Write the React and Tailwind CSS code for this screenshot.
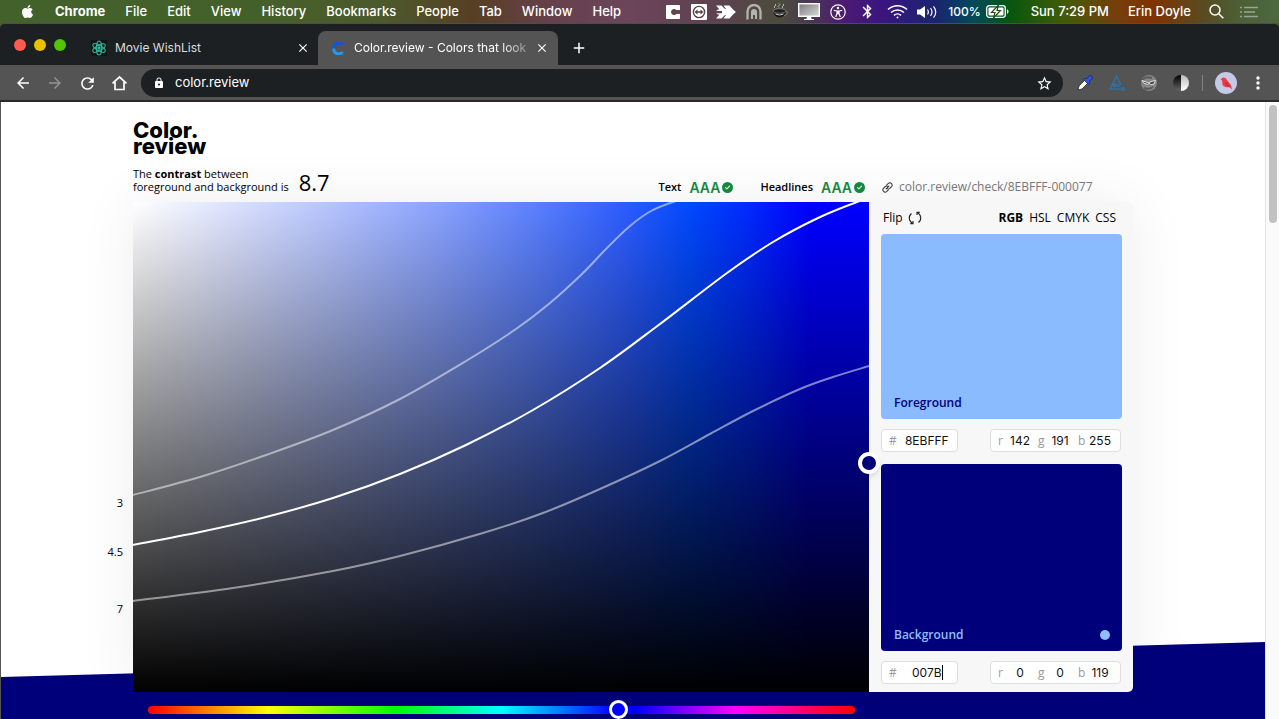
import React from "react";
import { FaApple, FaCircleCheck } from "react-icons/fa6";
import {
  MdAdd, MdArrowBack, MdArrowForward, MdBluetooth, MdClose, MdLock, MdMoreVert, MdRefresh, MdStarBorder,
} from "react-icons/md";

const menus = ["File", "Edit", "View", "History", "Bookmarks", "People", "Tab", "Window", "Help"];

const curves = [
  { opacity: 0.5, points: [[0, 293], [67, 275], [133, 253], [200, 228], [267, 197], [333, 159], [383, 127], [417, 101], [450, 71], [473, 47], [497, 24], [518, 9], [540, 0], [560, -5]] },
  { opacity: 1, points: [[0, 343], [67, 330], [133, 315], [200, 296], [267, 272], [333, 243], [400, 208], [467, 166], [527, 122], [594, 71], [640, 40], [685, 16], [724, 0], [745, -6]] },
  { opacity: 0.5, points: [[0, 399], [100, 386], [200, 369], [267, 354], [350, 331], [410, 311], [467, 287], [527, 259], [577, 232], [620, 209], [667, 187], [700, 175], [736, 164]] },
];

// Catmull-Rom spline through the sampled contrast points, as cubic Béziers
function spline(p) {
  let d = `M${p[0][0]} ${p[0][1]}`;
  for (let i = 0; i < p.length - 1; i++) {
    const a = p[i - 1] || p[i], b = p[i], c = p[i + 1], e = p[i + 2] || c;
    d += ` C${b[0] + (c[0] - a[0]) / 6} ${b[1] + (c[1] - a[1]) / 6} ${c[0] - (e[0] - b[0]) / 6} ${c[1] - (e[1] - b[1]) / 6} ${c[0]} ${c[1]}`;
  }
  return d;
}

function MenuBar() {
  return (
    <header className="flex h-[23px] items-center justify-between bg-[linear-gradient(90deg,#43622b_0%,#44602a_20%,#4c5a2b_30%,#573f24_37%,#66404b_43%,#6c455a_49%,#5c4250_56%,#4c4b3c_61%,#4a3a50_63%,#4c1a72_66%,#3a1580_69%,#1b2372_73%,#04485c_76%,#08560e_79%,#3f5c08_83%,#72400a_87%,#823200_90%,#5a4a20_94%,#4c6036_97%,#4d6840_100%)] pl-5 pr-[21px] font-['Inter',sans-serif] text-[13px] font-medium text-white">
      <nav className="flex items-center gap-5">
        <FaApple className="size-[15px]" />
        <a href="#chrome" className="font-bold">Chrome</a>
        {menus.map((m) => <a key={m} href={"#" + m.toLowerCase()}>{m}</a>)}
      </nav>
      <div className="flex items-center">
        <svg className="h-[14px] w-[15px]" viewBox="0 0 15 14"><rect width="14" height="14" fill="#fff" rx="1" /><path d="M14 5.3H10.5A3 3 0 1 0 10.500 8.700H14" fill="#66424f" /><path d="M8 5.200h6v3.600H8z" fill="#66424f" /></svg>
        <svg className="ml-[10px] h-4 w-4" viewBox="0 0 16 16"><rect width="16" height="16" rx="1" fill="#fff" /><circle cx="8" cy="8" r="5.600" fill="none" stroke="#5b4148" strokeWidth="1.400" /><path d="M3.500 8 6.500 5.500V7.200h3V5.500L12.500 8l-3 2.500V8.800h-3v1.700z" fill="#5b4148" /></svg>
        <svg className="ml-[9px] h-[14px] w-5" viewBox="0 0 20 14"><path d="M0 .5h5.500L9 4h1L7.500 .5h6L17 4.500 20 7l-3 2.500-3.500 4h-6L10 10H9l-3.500 3.500H0L3.500 9.500H2L0 8.200h6V6H0l2-1.500h1.500z" fill="#fff" /></svg>
        <svg className="ml-[10px] h-4 w-4" viewBox="0 0 16 16"><path d="M1.500 15.500V7.500a6.500 6.500 0 0 1 13 0v8" fill="none" stroke="#b3b3aa" strokeWidth="2.300" /><path d="M5 15V8a3 3 0 0 1 6 0v7H9v-4H7v4z" fill="#b3b3aa" /></svg>
        <svg className="ml-[9px] h-[18px] w-[18px]" viewBox="0 0 18 18"><path d="M2 8a6.500 6.500 0 0 0 13 0z" fill="#161616" /><ellipse cx="8.500" cy="8" rx="6.500" ry="2.300" fill="#202020" stroke="#999" strokeWidth=".7" /><path d="M15 9q3-1 1 2-1 1.500-3 1.500" stroke="#777" fill="none" /><path d="M4.500 11q4 2 8 0" stroke="#eee" strokeWidth=".8" fill="none" /><path d="M4 5q-2-1 0-2t0-2M8 4.500q-2-1 0-2t0-2M12 5q-2-1 0-2t0-2" stroke="#ccc" strokeWidth=".8" fill="none" /></svg>
        <svg className="ml-[9px] h-[17px] w-[22px]" viewBox="0 0 22 17"><defs><linearGradient id="scr" x2="1" y2="1"><stop stopColor="#777" /><stop offset="1" stopColor="#ddd" /></linearGradient></defs><rect x=".7" y=".7" width="20.600" height="12.600" fill="url(#scr)" stroke="#fff" strokeWidth="1.400" /><path d="M9 13.500h4l.7 2.500H16v1H6v-1h2.300z" fill="#fff" /></svg>
        <svg className="ml-[10px] h-4 w-4" viewBox="0 0 16 16" fill="none" stroke="#fff" strokeWidth="1.200"><circle cx="8" cy="8" r="7.200" /><circle cx="8" cy="4" r="1.200" fill="#fff" stroke="none" /><path d="M3.800 6.300 7 7h2l3.200-.7M7 7v2.500L5.700 13M9 7v2.500l1.300 3.500M7.400 7v2.600h1.200V7" /></svg>
        <MdBluetooth className="ml-[13px] size-[17px]" />
        <svg className="ml-[11px] h-[15px] w-[21px]" viewBox="0 0 21 15" fill="none" stroke="#fff" strokeWidth="1.600"><path d="M1 5.500a14 14 0 0 1 19 0M4 8.500a9.500 9.500 0 0 1 13 0M7 11.300a5.300 5.300 0 0 1 7 0" /><circle cx="10.500" cy="13.500" r="1" fill="#fff" stroke="none" /></svg>
        <svg className="ml-[9px] h-[14px] w-[21px]" viewBox="0 0 21 14" fill="none" stroke="#fff" strokeWidth="1.200"><path d="M0 4.500h3L8 1v12L3 9.500H0z" fill="#fff" stroke="none" /><path d="M10.500 4.500q1.700 2.500 0 5M13.500 3q3 4 0 8M16.500 1.300q4.500 5.700 0 11.400" /></svg>
        <span className="ml-[10px] text-xs">100%</span>
        <svg className="ml-[5px] h-[13px] w-[23px]" viewBox="0 0 23 13"><rect x=".7" y=".7" width="18.600" height="11.600" rx="2.500" fill="none" stroke="#fff" strokeWidth="1.300" /><rect x="2.500" y="2.500" width="15" height="8" rx="1" fill="#fff" /><path d="M21 4v5q1.500-1 1.500-2.500T21 4" fill="#fff" /><path d="M12.500 0 5.500 7.500h3.500L7.500 13l7-7.500H11z" fill="#fff" stroke="#264f12" strokeWidth="1.200" /></svg>
        <span className="ml-[22px]">Sun 7:29 PM</span>
        <span className="ml-[19px]">Erin Doyle</span>
        <svg className="ml-[18px] size-[15px]" viewBox="0 0 15 15" fill="none" stroke="#fff" strokeWidth="1.500"><circle cx="6" cy="6" r="5" /><path d="m9.700 9.700 4.600 4.600" /></svg>
        <svg className="ml-4 h-3 w-[18px]" viewBox="0 0 18 12" stroke="#9aa591" strokeWidth="1.600"><path d="M0 1.500h2M4 1.500h14M0 6h2M4 6h11M0 10.500h2M4 10.500h14" /></svg>
      </div>
    </header>
  );
}

function TabStrip() {
  return (
    <div className="flex h-[42px] items-end rounded-t-[5px] border-t border-[#4b4d4e] bg-[#1c2023] font-['Inter',sans-serif] text-xs text-[#dcdddd]">
      <div className="flex h-[41px] items-center gap-2 pl-[14px]">
        <button aria-label="Close window" className="size-3 rounded-full bg-[#ff5b50]" />
        <button aria-label="Minimize window" className="size-3 rounded-full bg-[#e9c100]" />
        <button aria-label="Zoom window" className="size-3 rounded-full bg-[#55c400]" />
      </div>
      <div className="ml-[25px] flex h-[34px] w-[227px] items-center pr-2">
        <svg className="size-4" viewBox="0 0 16 16" fill="none" stroke="#2fb79a" strokeWidth="1.100"><rect width="16" height="16" fill="#111719" stroke="none" /><ellipse cx="8" cy="8" rx="7" ry="2.700" transform="rotate(90 8 8)" /><ellipse cx="8" cy="8" rx="7" ry="2.700" transform="rotate(30 8 8)" /><ellipse cx="8" cy="8" rx="7" ry="2.700" transform="rotate(150 8 8)" /><circle cx="8" cy="8" r="1.200" fill="#2fb79a" /></svg>
        <span className="ml-2 flex-1">Movie WishList</span>
        <button aria-label="Close Movie WishList"><MdClose className="size-[14px] text-white" /></button>
      </div>
      <div className="flex h-[34px] w-[240px] items-center rounded-t-lg bg-[#545454] pl-[14px] pr-[9px]">
        <svg className="size-[13px]" viewBox="0 0 13 13" fill="none" strokeWidth="3"><path d="M10.500 3A4.700 4.700 0 0 0 2 6.500" stroke="#0b57d8" /><path d="M2 6.500A4.700 4.700 0 0 0 10.500 10" stroke="#1d9bf5" /></svg>
        <span className="ml-[9px] whitespace-nowrap text-white [mask-image:linear-gradient(90deg,#000_85%,#0005_100%)]">Color.review - Colors that look</span>
        <button aria-label="Close Color.review" className="ml-auto"><MdClose className="size-[14px] text-white" /></button>
      </div>
      <button aria-label="New tab" className="ml-3 flex h-[34px] items-center"><MdAdd className="size-[18px] text-white" /></button>
    </div>
  );
}

function Toolbar() {
  return (
    <div className="flex h-[37px] items-center border-b-2 border-[#2b292a] bg-[#545454] pt-px pl-[14px] pr-[11px] text-white">
      <div className="flex items-center gap-[14px]">
        <button aria-label="Back"><MdArrowBack className="size-[18px]" /></button>
        <button aria-label="Forward"><MdArrowForward className="size-[18px] text-[#929292]" /></button>
        <button aria-label="Reload"><MdRefresh className="size-[19px]" /></button>
        <button aria-label="Home"><svg className="size-[17px]" viewBox="0 0 17 17" fill="none" stroke="#fff" strokeWidth="1.700"><path d="M1.500 8.300 8.500 2l7 6.300M4 7v7.500h9V7" /></svg></button>
      </div>
      <div className="ml-[13px] flex h-7 flex-1 items-center rounded-full bg-[#1c2023] pl-3 pr-[10px]">
        <MdLock className="size-3" />
        <input aria-label="Address" defaultValue="color.review" className="ml-[10px] min-w-0 flex-1 bg-transparent font-['Inter',sans-serif] text-[13px] text-white outline-none" />
        <button aria-label="Bookmark this page"><MdStarBorder className="size-[17px]" /></button>
      </div>
      <div className="ml-[14px] flex items-center gap-4">
        <button aria-label="Color picker"><svg className="size-4" viewBox="0 0 16 16"><path d="M1 15l1-4 6-6 3 3-6 6z" fill="#fff" stroke="#222" strokeWidth=".8" /><path d="M6.500 4.500 8 3l1.500 1L12 1.200a1.900 1.900 0 0 1 2.800 2.800L12 6.500 13 8l-1.500 1.500z" fill="#2f55e8" stroke="#15256d" strokeWidth=".8" /></svg></button>
        <button aria-label="Axe"><svg className="size-4" viewBox="0 0 16 16" fill="none" stroke="#2677b8" strokeWidth="1.200"><path d="M12 10 7.500 1 .8 14H12" /><circle cx="14" cy="14" r="1.300" /><circle cx="5.500" cy="10.500" r="1.300" /><path d="M7.200 9v3M8.500 9l2 3M10.500 9l-2 3" strokeWidth=".9" /></svg></button>
        <button aria-label="Funkify"><svg className="size-4" viewBox="0 0 16 16"><circle cx="8" cy="8" r="8" fill="#858585" /><path d="M1 5q4-4 10-2M3 13q5 2 9-1" stroke="#5a5a5a" fill="none" strokeWidth="2" /><path d="M1 5.500 6.500 7.500 8 8 10 6.500 14.500 5.500 13 9l-3 .8L8.500 8.300 6.500 9.300 3.500 8.500z" fill="#444" stroke="#f2f2f2" strokeWidth=".9" /></svg></button>
        <button aria-label="Contrast"><svg className="size-4" viewBox="0 0 16 16"><defs><linearGradient id="dk" x2="0" y2="1"><stop stopColor="#000" /><stop offset="1" stopColor="#666" /></linearGradient><linearGradient id="lt" x2="0" y2="1"><stop stopColor="#bbb" /><stop offset="1" stopColor="#fff" /></linearGradient></defs><path d="M8 0a8 8 0 0 0 0 16z" fill="url(#dk)" /><path d="M8 0a8 8 0 0 1 0 16z" fill="url(#lt)" /></svg></button>
      </div>
      <span className="ml-[13px] h-4 w-px bg-[#838383]" />
      <button aria-label="Profile" className="ml-3"><svg className="size-[22px]" viewBox="0 0 22 22"><circle cx="11" cy="11" r="11" fill="#c6c9e6" /><path d="M5.500 7.500 8 5.500q3-.5 4 2.500l4 5 1 4.500-3-2.500q-5 1-6.500-2.500l-.5-4z" fill="#ee3b42" /><path d="m10 9 5 6-4-2z" fill="#b8264a" /></svg></button>
      <button aria-label="Chrome menu" className="ml-[11px]"><MdMoreVert className="size-5" /></button>
    </div>
  );
}

function Rating({ label }) {
  return (
    <div className="flex items-center text-[11px] font-semibold">
      <span>{label}</span>
      <span className="ml-2 font-['Inter',sans-serif] text-[14px] font-semibold text-[#178740]">AAA</span>
      <FaCircleCheck className="ml-[2px] size-[11px] text-[#178740]" />
    </div>
  );
}

function Swatch({ title, className, dot }) {
  return (
    <section className={"flex items-end justify-between rounded pr-3 pb-2 pl-[13px] " + className}>
      <h2 className="text-xs leading-4 font-semibold">{title}</h2>
      {dot && <span className="mb-[3px] size-[10px] rounded-full bg-[#8ebfff]" />}
    </section>
  );
}

function Fields({ id, hex, rgb, caret }) {
  return (
    <div className="mt-[10px] flex h-[23px] justify-between pr-px text-xs text-[#999]">
      <div className="flex w-[77px] items-center rounded border border-[#dedede] bg-white pl-[7px]">
        <label htmlFor={id + "-hex"}>#</label>
        <div className="relative ml-1 flex w-[52px] items-center">
          <input id={id + "-hex"} defaultValue={hex} className="w-full bg-transparent text-center font-['Inter',sans-serif] text-xs text-[#111] outline-none" />
          {caret && <span className="absolute right-[10px] h-[15px] w-px bg-black" />}
        </div>
      </div>
      <div className="flex w-[131px] items-center rounded border border-[#dedede] bg-white pl-[7px]">
        {["r", "g", "b"].map((c, i) => (
          <React.Fragment key={c}>
            <label htmlFor={id + c} className="w-2">{c}</label>
            <input id={id + c} defaultValue={rgb[i]} className="mr-1 w-7 min-w-0 bg-transparent text-center font-['Inter',sans-serif] text-xs text-[#111] outline-none" />
          </React.Fragment>
        ))}
      </div>
    </div>
  );
}

export default function App() {
  return (
    <div className="flex min-h-screen flex-col bg-[#43622b]">
      <MenuBar />
      <TabStrip />
      <Toolbar />
      <div className="flex flex-1 border-l border-[#545454] bg-white">
        <main className="relative z-0 flex-1 overflow-hidden bg-white font-['Open_Sans',sans-serif] text-black">
          <div className="absolute inset-x-0 bottom-0 -z-10 h-[77px] bg-[#00007b] [clip-path:polygon(0_35px,100%_0,100%_100%,0_100%)]" />
          <div className="mx-auto w-full max-w-[1000px] pt-5">
            <h1 className="font-['Inter',sans-serif] text-[22px] leading-4 font-extrabold">
              <span className="block">Color.</span>
              <span className="block">review</span>
            </h1>
            <div className="mt-[13px] flex h-[35px] items-start">
              <div className="flex flex-1">
                <p className="text-[11px] leading-[13px]">The <b>contrast</b> between<br />foreground and background is</p>
                <output className="ml-[10px] mt-[2px] text-[22px] leading-[26px]">8.7</output>
                <div className="ml-auto mr-1 mt-3 flex h-4 items-center gap-[27px]">
                  <Rating label="Text" />
                  <Rating label="Headlines" />
                </div>
              </div>
              <a href="#check" className="mt-3 flex h-4 w-[264px] items-center pl-[13px] text-xs text-[#777]">
                <svg className="mr-[6px] size-[11px]" viewBox="0 0 24 24" fill="none" stroke="#333" strokeWidth="2.200" strokeLinecap="round"><path d="m9 15 6-6M10.500 6.500 14 3a5 5 0 0 1 7 7l-4 4a5 5 0 0 1-6 .6M13.500 17.500 10 21a5 5 0 0 1-7-7l4-4a5 5 0 0 1 6-.6" /></svg>
                color.review/check/8EBFFF-000077
              </a>
            </div>
            <div className="flex rounded-r-[5px] shadow-[0_0_60px_rgba(0,0,0,0.07)]">
              <div className="relative flex-1 bg-[linear-gradient(180deg,transparent,#000),linear-gradient(90deg,#fff_0%,#dde3ff_13%,#b5c4ff_27%,#8ba4ff_41%,#5d82ff_54%,#2c5cff_67%,#0048ff_76%,#0028ff_84%,#0000ff_92%)]">
                <svg className="absolute inset-0 size-full" viewBox="0 0 736 490" preserveAspectRatio="none" fill="none" stroke="#fff" strokeWidth="2">
                  {curves.map((c, i) => <path key={i} d={spline(c.points)} strokeOpacity={c.opacity} />)}
                </svg>
                <span className="absolute top-[59%] right-full mt-1 mr-[10px] text-[11px] leading-4">3</span>
                <span className="absolute top-[69%] right-full mt-1 mr-[10px] text-[11px] leading-4">4.5</span>
                <span className="absolute top-[81%] right-full mt-[2px] mr-[10px] text-[11px] leading-4">7</span>
                <button aria-label="Background color" className="absolute top-[250px] -right-[11px] size-[22px] rounded-full border-4 border-white bg-[#00007b] shadow-md" />
              </div>
              <aside className="w-[264px] rounded-r-[5px] bg-[#f7f7f7] pb-2 pl-3 pr-[11px]">
                <div className="flex h-8 items-center justify-between pr-[6px] pl-[2px] text-xs">
                  <button className="flex items-center gap-[5px]">
                    Flip
                    <svg className="size-[14px]" viewBox="0 0 14 14" fill="none" stroke="#222" strokeWidth="1.100"><path d="M4.800 12.300A5.700 5.700 0 0 1 3.500 2.500M9.200 1.700A5.700 5.700 0 0 1 10.500 11.500" /><path d="M2.300 12.600H5V9.900M11.700 1.400H9V4.100" /></svg>
                  </button>
                  <div className="flex gap-[6px]">
                    <button className="font-bold">RGB</button>
                    <button>HSL</button>
                    <button>CMYK</button>
                    <button>CSS</button>
                  </div>
                </div>
                <Swatch title="Foreground" className="h-[185px] bg-[#8abbff] text-[#00007b]" />
                <Fields id="fg" hex="8EBFFF" rgb={[142, 191, 255]} />
                <Swatch title="Background" className="mt-3 h-[187px] bg-[#00007b] text-[#8ebfff]" dot />
                <Fields id="bg" hex="007B" rgb={[0, 0, 119]} caret />
              </aside>
            </div>
            <div className="mt-2 flex pr-[278px] pl-[15px]">
              <input
                type="range" min="0" max="360" defaultValue="241" aria-label="Hue"
                className="block h-[19px] w-full appearance-none bg-transparent [&::-webkit-slider-runnable-track]:h-2 [&::-webkit-slider-runnable-track]:rounded-full [&::-webkit-slider-runnable-track]:bg-[linear-gradient(90deg,#f00,#ff0_17%,#0f0_35%,#0ff_50%,#00f_66%,#00f_69%,#f0f_83%,#f00)] [&::-webkit-slider-thumb]:-mt-[6px] [&::-webkit-slider-thumb]:size-[19px] [&::-webkit-slider-thumb]:appearance-none [&::-webkit-slider-thumb]:rounded-full [&::-webkit-slider-thumb]:border-3 [&::-webkit-slider-thumb]:border-white [&::-webkit-slider-thumb]:bg-[#0000ff]"
              />
            </div>
          </div>
        </main>
        <div className="w-[14px] border-l border-[#e4e4e4] bg-[#fafafa] pt-[3px] pl-[3px]">
          <div className="h-[118px] w-2 rounded-full bg-[#c1c1c1]" />
        </div>
      </div>
    </div>
  );
}
